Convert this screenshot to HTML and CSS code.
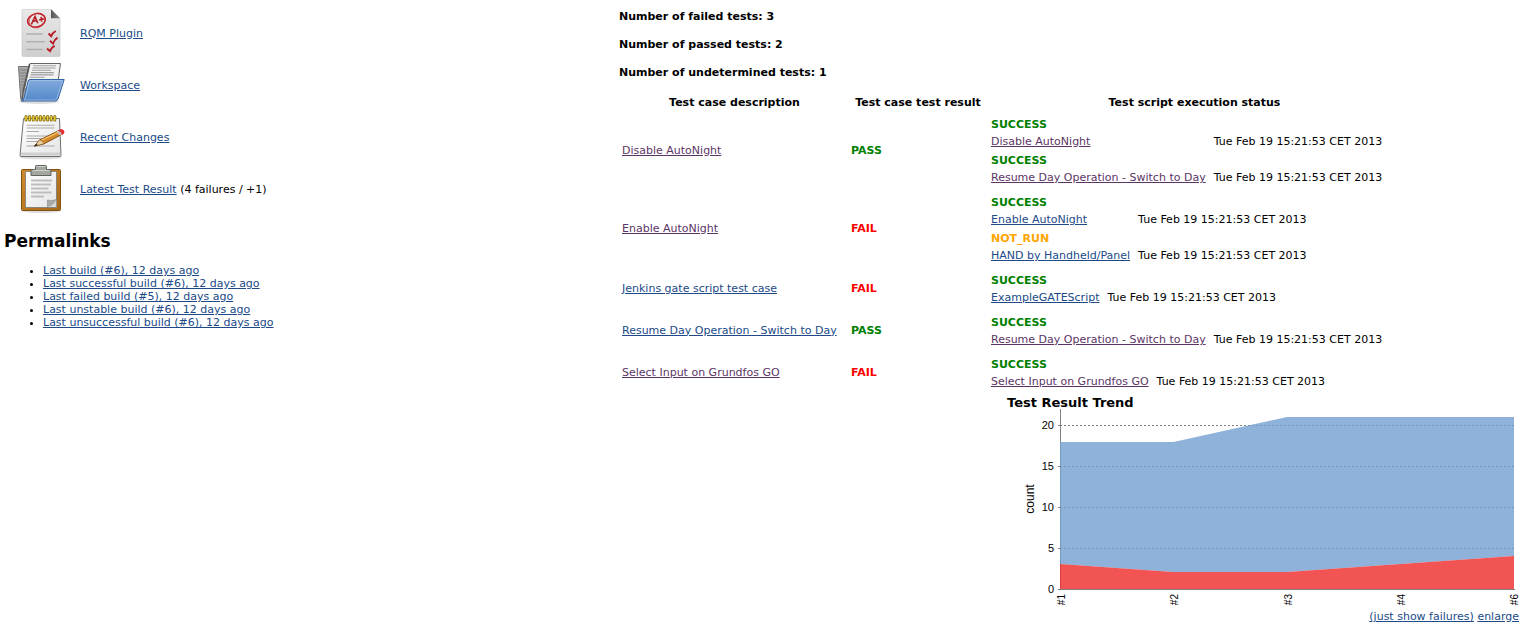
FILE: index.html
```html
<!DOCTYPE html>
<html lang="en">
<head>
<meta charset="utf-8">
<title>RQM test results</title>
<link rel="stylesheet" href="styles.css">
</head>
<body>
<main class="page">
  <div class="summary">
    <ul class="tasks">
      <li class="task">
        <svg class="task-icon" viewBox="0 0 48 48" aria-hidden="true">
          <defs>
            <linearGradient id="paper" x1="0" y1="0" x2="0" y2="1"><stop offset="0" stop-color="#e9e9e9"/><stop offset="1" stop-color="#cfcfcf"/></linearGradient>
            <linearGradient id="fold" x1="0" y1="0" x2="1" y2="0"><stop offset="0" stop-color="#555"/><stop offset="1" stop-color="#8a8a8a"/></linearGradient>
            <linearGradient id="folder" x1="0" y1="0" x2="0" y2="1"><stop offset="0" stop-color="#82abde"/><stop offset="1" stop-color="#5488c8"/></linearGradient>
            <linearGradient id="sheet" x1="0" y1="0" x2="1" y2="1"><stop offset="0" stop-color="#ffffff"/><stop offset="1" stop-color="#e4e4e4"/></linearGradient>
            <linearGradient id="wood" x1="0" y1="0" x2="1" y2="1"><stop offset="0" stop-color="#d08a2a"/><stop offset="1" stop-color="#a5691a"/></linearGradient>
          </defs>
          <path d="M6 .3h28l9 9V46.500q0 1-1 1H6q-1 0-1-1V1.300q0-1 1-1z" fill="url(#paper)" stroke="#c4c4c4" stroke-width=".6"/>
          <path d="M34 .3 43 9.300H34z" fill="url(#fold)"/>
          <ellipse cx="19.500" cy="11.300" rx="9" ry="6.600" transform="rotate(-14 19.500 11.300)" fill="none" stroke="#c4202a" stroke-width="1.500"/>
          <ellipse cx="20" cy="11.500" rx="8.300" ry="7" transform="rotate(-30 20 11.500)" fill="none" stroke="#c4202a" stroke-width=".7"/>
          <path d="m14.300 15.500 3.700-8 2.800 6.800m-5.200-2 4.300-.8m2.300-.7 4.600-.9m-2.700-2 .7 4.700" fill="none" stroke="#b81c26" stroke-width="1.700"/>
          <path d="M9.700 25h15.600M9.700 32.800h17.500M9.700 40.500h15.600" stroke="#b0b0b0" stroke-width="1.500" stroke-linecap="round"/>
          <path d="m31.500 24.500 2.700 2.700q1.300-3.500 4.500-5.200M33 31.800l3 2.800q1.300-4 4.500-6M30 39.500l3 2.700q1.500-4 4.700-5.400" fill="none" stroke="#b81c26" stroke-width="1.900"/>
        </svg>
        <a class="link" href="#">RQM Plugin</a>
      </li>
      <li class="task">
        <svg class="task-icon" viewBox="0 0 48 48" aria-hidden="true">
          <ellipse cx="22" cy="40.500" rx="20" ry="2.500" fill="#ddd"/>
          <path d="M1.500 5.500h12V38l-8 2q-1.500 0-1.800-2.500z" fill="#a8a8a8" stroke="#707070"/>
          <path d="M3 9h9M3 12h9M3.500 15h8M4 18h7M4 21h7M4 24h6M4.500 27h5M4.500 30h5" stroke="#7d7d7d" stroke-width="1"/>
          <path d="M13 2.500h30.500L40 28H7.500z" fill="#f2f2f2" stroke="#666"/>
          <path d="M16 4.700h23M15.500 7h23M15 9.300h19M14 11.600h23M13.500 13.900h23M12.500 16.200h15" stroke="#a0a0a0" stroke-width="1.100"/>
          <path d="m12.500 3-6 25-1.500 11" fill="none" stroke="#555" stroke-width="1.300"/>
          <path d="M13 18.500h34.200L41 38q-.8 2-3 2H4.500q2-.8 2.800-4l3.700-15.500q.5-2 2-2z" fill="url(#folder)" stroke="#3465a4"/>
          <path d="M13.300 19.600h32.400l-5.700 17.500q-.7 1.800-2.300 1.900H7q1-1 1.500-3l3.500-14.600q.3-1.700 1.300-1.800z" fill="none" stroke="#a9c6ea" stroke-width=".7"/>
        </svg>
        <a class="link" href="#">Workspace</a>
      </li>
      <li class="task">
        <svg class="task-icon" viewBox="0 0 48 48" aria-hidden="true">
          <ellipse cx="24" cy="44.500" rx="21" ry="1.800" fill="#ddd"/>
          <path d="M6.500 5.500h36l1.500 37q0 1-1 1H4q-1 0-1-1z" fill="url(#sheet)" stroke="#6f6f6f"/>
          <path d="M4 39.500h39l.3 3H3.800z" fill="#cfcfcf"/>
          <path d="M9.500 12.200h28M9.500 15h28M9.500 18.500h12.500M9.500 23h27M9.500 25.500h24M9.500 28.500h16M9.500 33h28" stroke="#aaa" stroke-width="1.100"/>
          <path d="M9 3.500v3.500M12.600 3.500v3.500M16.200 3.500v3.500M19.800 3.500v3.500M23.400 3.500v3.500M27 3.500v3.500M30.600 3.500v3.500M34.200 3.500v3.500M37.800 3.500v3.500" stroke="#7c6700" stroke-width="3" stroke-linecap="round"/>
          <path d="M9 3.500v3.500M12.600 3.500v3.500M16.200 3.500v3.500M19.800 3.500v3.500M23.400 3.500v3.500M27 3.500v3.500M30.600 3.500v3.500M34.200 3.500v3.500M37.800 3.500v3.500" stroke="#edd23c" stroke-width="1.500" stroke-linecap="round"/>
          <path d="m17.500 33 5-6L42 17.500q3-.5 3.500 3.500L27 30.800z" fill="#d58a2a" stroke="#7d4d12"/>
          <path d="m23.500 27.600 17.500-8.300" stroke="#f3bb68" stroke-width="1.300"/>
          <path d="m17.300 33.200 5.200-6.200q3.500.5 4.500 3.800z" fill="#ead1a1" stroke="#7d4d12" stroke-width=".6"/>
          <path d="m17 33.500 2.300-2.800 1.500 1.500z" fill="#222"/>
          <path d="m39.500 18.500 2-1q3.200.8 3.700 3.700l-2 1.200z" fill="#c9c9c9"/>
          <path d="M41.500 17.500q3.500-2 5.200.3 1.300 2.200-1.500 3.700-.2-2.800-3.700-4z" fill="#ee3434" stroke="#d01f1f" stroke-width=".8"/>
        </svg>
        <a class="link" href="#">Recent Changes</a>
      </li>
      <li class="task">
        <svg class="task-icon" viewBox="0 0 48 48" aria-hidden="true">
          <ellipse cx="24" cy="46" rx="19" ry="2" fill="#ddd"/>
          <rect x="4.500" y="4.500" width="39" height="41" rx="1" fill="url(#wood)" stroke="#82500f"/>
          <path d="M8.500 6.500h31v36h-31z" fill="url(#sheet)" stroke="#777" stroke-width=".8"/>
          <path d="M14 15.500h21M14 19.500h20M14 23.500h17.500M14 27.500h20.500M14 31.500h13" stroke="#bdbdbd" stroke-width="1.800"/>
          <path d="M30.500 42.500V35q4 1.500 8.700-.5v8z" fill="#a5aaa6" stroke="#777" stroke-width=".5"/>
          <path d="M31 42q6-1.500 8.200-7.500V42z" fill="#d8dad8"/>
          <path d="M15 4.500h3.500V1.500q0-1 1-1h9q1 0 1 1v3H33q1 0 1 1v5H14v-5q0-1 1-1z" fill="#a2a89f" stroke="#5f655e"/>
          <path d="M20 1.500h8M16 5.500h16" fill="none" stroke="#ced2cc"/>
        </svg>
        <span><a class="link" href="#">Latest Test Result</a> (4 failures / +1)</span>
      </li>
    </ul>
    <h2 class="permalinks-title">Permalinks</h2>
    <ul class="permalinks">
      <li><a class="link" href="#">Last build (#6), 12 days ago</a></li>
      <li><a class="link" href="#">Last successful build (#6), 12 days ago</a></li>
      <li><a class="link" href="#">Last failed build (#5), 12 days ago</a></li>
      <li><a class="link" href="#">Last unstable build (#6), 12 days ago</a></li>
      <li><a class="link" href="#">Last unsuccessful build (#6), 12 days ago</a></li>
    </ul>
  </div>

  <div class="results">
    <h4 class="count">Number of failed tests: 3</h4>
    <h4 class="count">Number of passed tests: 2</h4>
    <h4 class="count">Number of undetermined tests: 1</h4>

    <table class="cases">
      <thead>
        <tr>
          <th class="col-description">Test case description</th>
          <th class="col-result">Test case test result</th>
          <th class="col-status">Test script execution status</th>
        </tr>
      </thead>
      <tbody>
        <tr>
          <td class="case"><a class="link visited" href="#">Disable AutoNight</a></td>
          <td class="case pass">PASS</td>
          <td>
            <table class="scripts">
              <tr><td class="pass" colspan="2">SUCCESS</td></tr>
              <tr class="script"><td><a class="link visited" href="#">Disable AutoNight</a></td><td class="date">Tue Feb 19 15:21:53 CET 2013</td></tr>
              <tr><td class="pass" colspan="2">SUCCESS</td></tr>
              <tr class="script"><td><a class="link visited" href="#">Resume Day Operation - Switch to Day</a></td><td class="date">Tue Feb 19 15:21:53 CET 2013</td></tr>
            </table>
          </td>
        </tr>
        <tr>
          <td class="case"><a class="link visited" href="#">Enable AutoNight</a></td>
          <td class="case fail">FAIL</td>
          <td>
            <table class="scripts">
              <tr><td class="pass" colspan="2">SUCCESS</td></tr>
              <tr class="script"><td><a class="link" href="#">Enable AutoNight</a></td><td class="date">Tue Feb 19 15:21:53 CET 2013</td></tr>
              <tr><td class="not-run" colspan="2">NOT_RUN</td></tr>
              <tr class="script"><td><a class="link" href="#">HAND by Handheld/Panel</a></td><td class="date">Tue Feb 19 15:21:53 CET 2013</td></tr>
            </table>
          </td>
        </tr>
        <tr>
          <td class="case"><a class="link" href="#">Jenkins gate script test case</a></td>
          <td class="case fail">FAIL</td>
          <td>
            <table class="scripts">
              <tr><td class="pass" colspan="2">SUCCESS</td></tr>
              <tr class="script"><td><a class="link" href="#">ExampleGATEScript</a></td><td class="date">Tue Feb 19 15:21:53 CET 2013</td></tr>
            </table>
          </td>
        </tr>
        <tr>
          <td class="case"><a class="link" href="#">Resume Day Operation - Switch to Day</a></td>
          <td class="case pass">PASS</td>
          <td>
            <table class="scripts">
              <tr><td class="pass" colspan="2">SUCCESS</td></tr>
              <tr class="script"><td><a class="link visited" href="#">Resume Day Operation - Switch to Day</a></td><td class="date">Tue Feb 19 15:21:53 CET 2013</td></tr>
            </table>
          </td>
        </tr>
        <tr>
          <td class="case"><a class="link visited" href="#">Select Input on Grundfos GO</a></td>
          <td class="case fail">FAIL</td>
          <td>
            <table class="scripts">
              <tr><td class="pass" colspan="2">SUCCESS</td></tr>
              <tr class="script"><td><a class="link visited" href="#">Select Input on Grundfos GO</a></td><td class="date">Tue Feb 19 15:21:53 CET 2013</td></tr>
            </table>
          </td>
        </tr>
      </tbody>
    </table>

    <section class="trend">
      <h3 class="trend-title">Test Result Trend</h3>
      <svg class="chart" viewBox="0 0 500 200" role="img" aria-label="Test result trend">
        <g stroke="#808080" stroke-dasharray="2 2">
          <path d="M41 16.500h454M41 57.500h454M41 98.500h454M41 139.500h454"/>
        </g>
        <path d="M41.500 0v180.500" stroke="#808080"/>
        <path d="M41 33H154.500L268 8H495V147L381.500 155 268 163H154.500L41 155z" fill="#729fcf" fill-opacity=".8"/>
        <path d="M41 155 154.500 163H268L381.500 155 495 147V180H41z" fill="#ef2929" fill-opacity=".8"/>
        <path d="M39 180.500H496M39 16.500h3M39 57.500h3M39 98.500h3M39 139.500h3" stroke="#808080" fill="none"/>
        <g class="value-labels">
          <text x="35" y="20">20</text>
          <text x="35" y="61">15</text>
          <text x="35" y="102">10</text>
          <text x="35" y="143">5</text>
          <text x="35" y="184">0</text>
        </g>
        <text class="axis-title" transform="translate(15 90) rotate(-90)">count</text>
        <g class="build-labels">
          <text transform="translate(46 185) rotate(-90)">#1</text>
          <text transform="translate(159 185) rotate(-90)">#2</text>
          <text transform="translate(273 185) rotate(-90)">#3</text>
          <text transform="translate(386 185) rotate(-90)">#4</text>
          <text transform="translate(499 185) rotate(-90)">#6</text>
        </g>
      </svg>
      <div class="trend-links">
        <a class="link" href="#">(just show failures)</a>
        <a class="link" href="#">enlarge</a>
      </div>
    </section>
  </div>
</main>
</body>
</html>
```
FILE: styles.css
```css
body {
  margin: 0;
  background: #fff;
  color: #000;
  font: 11px/13px Verdana, "DejaVu Sans", sans-serif;
}

.page {
  display: grid;
  grid-template-columns: minmax(300px, 615fr) minmax(800px, 900fr);
  padding: 0 5px 0 4px;
}

.link {
  color: #204a87;
  text-decoration: underline;
}

.visited {
  color: #5c3566;
}

.tasks {
  display: flex;
  flex-direction: column;
  gap: 4px;
  margin: 0;
  padding: 9px 0 0 13px;
  list-style: none;
}

.task {
  display: flex;
  align-items: center;
  gap: 15px;
}

.task-icon {
  width: 48px;
  height: 48px;
  flex: none;
}

.permalinks-title {
  margin: 18px 0 13px;
  font-size: 17px;
  line-height: 20px;
}

.permalinks {
  margin: 0;
  padding-left: 39px;
}

.results {
  display: flex;
  flex-direction: column;
  align-items: flex-start;
  padding-top: 10px;
}

.count {
  margin: 0 0 15px;
  font-size: 11px;
}

.cases {
  margin-top: -2px;
  border-spacing: 2px;
}

.cases td,
.cases th {
  padding: 1px;
  white-space: nowrap;
}

.cases th {
  line-height: 16px;
}

.cases .case {
  padding-bottom: 5px;
}

.col-description {
  width: 225px;
}

.col-result {
  width: 134px;
}

.col-status {
  width: 411px;
}

.scripts {
  border-spacing: 2px;
  line-height: 15px;
}

.cases .scripts td {
  padding: 0;
}

.cases .script td {
  padding-bottom: 2px;
}

.cases .script .date {
  padding-left: 6px;
}

.pass,
.fail,
.not-run {
  font-weight: bold;
}

.pass {
  color: #008000;
}

.fail {
  color: #f00;
}

.not-run {
  color: #ffa500;
}

.trend {
  align-self: flex-end;
  width: 512px;
}

.trend-title {
  margin: 0;
  font-size: 13px;
  line-height: 13px;
}

.chart {
  display: block;
  width: 500px;
  margin-left: auto;
  font-family: "Liberation Sans", Arial, sans-serif;
}

.value-labels {
  font-size: 11px;
  text-anchor: end;
}

.axis-title {
  font-size: 12px;
  text-anchor: middle;
}

.build-labels {
  font-size: 10px;
  text-anchor: end;
}

.trend-links {
  padding-top: 1px;
  text-align: right;
}
```
